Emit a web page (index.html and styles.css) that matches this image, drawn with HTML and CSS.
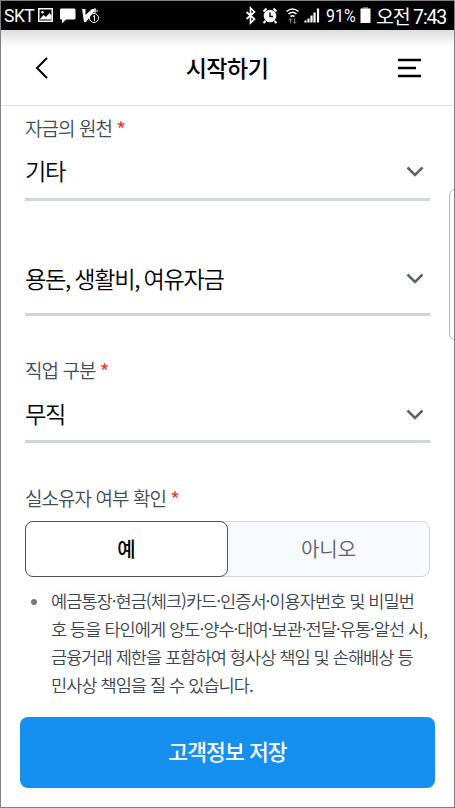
FILE: index.html
```html
<!DOCTYPE html>
<html lang="ko">
<head>
<meta charset="utf-8">
<title>시작하기</title>
<link rel="stylesheet" href="styles.css">
</head>
<body>
<div class="phone">
  <div class="status">
    <span class="carrier">SKT</span>
    <svg class="left-icons" width="64" height="20" viewBox="0 0 64 20">
      <path fill="#fff" fill-rule="evenodd" d="M1 2h15v14H1zM2.500 3.500v11h12v-11z"/>
      <path fill="#fff" d="M3 13l3.500-4 2.500 2 3.500-4 2 2.500v4H3z"/><circle cx="5.500" cy="6.200" r="1.200" fill="#fff"/>
      <path fill="#fff" d="M24 2.500h13q1.500 0 1.500 1.500v8q0 1.500-1.500 1.500h-8l-4 4v-4h-1q-1 0-1-1.500v-8q0-1.500 1-1.500z"/>
      <path fill="#fff" d="M45 3h3.500v6l6.500-6h4L49 16h-2z"/>
      <circle cx="57" cy="12" r="4.500" fill="#000" stroke="#fff"/><path d="M56 10.500l1.500-1V15M58 2v5M55.500 5H61" fill="none" stroke="#fff"/>
    </svg>
    <svg class="right-icons" width="76" height="20" viewBox="0 0 76 20">
      <path d="M1.500 6l8 7-4 4V2l4 4-8 7" fill="none" stroke="#fff" stroke-width="1.700"/>
      <circle cx="25" cy="10" r="6.300" fill="#fff"/><path d="M18.500 5.500l3-3M31.500 5.500l-3-3M20.500 15l-2 2M29.500 15l2 2" stroke="#fff" stroke-width="2"/><path d="M25 6.500V10.500h3" fill="none" stroke="#000" stroke-width="1.400"/>
      <path d="M41.500 5.500q6-5 12 0M43.500 8q4-3.500 8 0M45.500 10.500q2-1.500 4 0" fill="none" stroke="#fff" stroke-width="1.600"/><path d="M45.500 12.500v5M43.800 14.500l1.700-2 1.500 2M49.500 12.500v5M48 15.500l1.500 2 1.700-2" fill="none" stroke="#777"/>
      <path d="M60.500 16.500v-2M63.500 16.500v-4M66.500 16.500v-7M69.500 16.500v-10M73 16.500v-14" stroke="#fff" stroke-width="2.200"/>
    </svg>
    <span class="percent">91%</span>
    <svg class="battery" width="11" height="17" viewBox="0 0 11 17"><path d="M3 0h5v2H3z" fill="#666"/><path d="M.5 1.500h10V16H.5z" fill="#fff"/></svg>
    <span class="clock">오전 7:43</span>
  </div>
  <header class="header">
    <svg width="14" height="24" viewBox="0 0 14 24"><path d="M12 2L2 12l10 10" fill="none" stroke="#000" stroke-width="2"/></svg>
    <h1>시작하기</h1>
    <svg width="24" height="20" viewBox="0 0 24 20"><path d="M0 2h23M0 10h18M0 18h23" stroke="#000" stroke-width="2.300"/></svg>
  </header>
  <main class="form">
    <label class="label">자금의 원천<i>*</i></label>
    <div class="select first"><span>기타</span><svg class="chev" width="18" height="12" viewBox="0 0 18 12"><path d="M1.500 1.500L9 9l7.500-7.500" /></svg></div>
    <div class="select second"><span>용돈, 생활비, 여유자금</span><svg class="chev" width="18" height="12" viewBox="0 0 18 12"><path d="M1.500 1.500L9 9l7.500-7.500" /></svg></div>
    <label class="label job">직업 구분<i>*</i></label>
    <div class="select third"><span>무직</span><svg class="chev" width="18" height="12" viewBox="0 0 18 12"><path d="M1.500 1.500L9 9l7.500-7.500" /></svg></div>
    <label class="label owner">실소유자 여부 확인<i>*</i></label>
    <div class="toggle"><div class="yes">예</div><div class="no">아니오</div></div>
    <ul class="note"><li>예금통장·현금(체크)카드·인증서·이용자번호 및 비밀번<br>호 등을 타인에게 양도·양수·대여·보관·전달·유통·알선 시,<br>금융거래 제한을 포함하여 형사상 책임 및 손해배상 등<br>민사상 책임을 질 수 있습니다.</li></ul>
  </main>
  <button class="save">고객정보 저장</button>
  <div class="edge"></div>
</div>
</body>
</html>
```
FILE: styles.css
```css
* { box-sizing: border-box; }
body { margin: 0; font-family: "Noto Sans CJK KR", sans-serif; color: #000; }
.phone { position: relative; width: 455px; height: 808px; border: 1px solid #808080; background: #fff; overflow: hidden; display: flex; flex-direction: column; }
.status { flex: none; height: 29px; background: #000; color: #fff; display: flex; align-items: center; padding-left: 3px; font-family: Roboto, "Noto Sans CJK KR", sans-serif; font-size: 18px; white-space: nowrap; }
.carrier { width: 33px; font-size: 17.500px; letter-spacing: -.5px; }
.right-icons { margin-left: 144px; }
.percent { margin-left: 5px; width: 34px; font-size: 19px; transform: scaleX(.84); transform-origin: left; }
.battery { flex: none; }
.clock { margin-left: 5px; font-size: 19.500px; letter-spacing: -1.200px; }
.header { flex: none; height: 76px; display: flex; align-items: center; justify-content: space-between; padding: 0 32px 0 34px; border-bottom: 1px solid #dfe0e2; background: linear-gradient(#ddd, #fff 17px); }
.header h1 { margin: 0 0 2px 7px; font-size: 23px; line-height: 34px; font-weight: 500; letter-spacing: -.5px; }
.form { flex: none; height: 611px; padding: 8px 24px 0; }
.label { display: block; height: 28px; line-height: 28px; font-size: 19px; font-weight: 350; letter-spacing: -.95px; color: #434b54; }
.label i { font-style: normal; font-size: 22px; line-height: 20px; font-weight: 350; color: #e8382d; margin-left: 4px; vertical-align: -3px; }
.select { display: flex; justify-content: space-between; align-items: center; border-bottom: 3px solid #d0d6e0; padding: 0 6px 0 0; font-size: 23.200px; font-weight: 350; letter-spacing: -1.300px; word-spacing: -1px; }
.first { height: 59px; }
.second { height: 74px; margin-top: 41px; }
.third { height: 58px; }
.job { margin-top: 40px; margin-bottom: 1px; }
.owner { margin-top: 41px; }
.chev { fill: none; stroke: #5b636d; stroke-width: 2.500; position: relative; top: 2px; }
.second .chev { top: 1px; }
.toggle { height: 56px; margin-top: 9px; display: flex; border: 1px solid #d0d6e0; border-radius: 8px; background: #f7f9fd; font-size: 20px; line-height: 53px; text-align: center; }
.yes { width: 203px; margin: -1px 0 -1px -1px; border: 1px solid #4d545e; border-radius: 8px; background: #fff; font-weight: 500; }
.no { flex: 1; font-weight: 350; color: #5b626b; }
.note { list-style: none; margin: 10px 0 0; padding: 0 0 0 26px; font-size: 17.600px; line-height: 28px; font-weight: 350; letter-spacing: -1px; color: #3c444d; white-space: nowrap; }
.note li { position: relative; }
.note li::before { content: ""; position: absolute; left: -20px; top: 12px; width: 6px; height: 6px; border-radius: 50%; background: #737980; }
.save { flex: none; width: 415px; height: 71px; margin: 0 0 0 19px; padding: 0 0 4px; border: 0; border-radius: 8px; background: #1590f0; color: #fff; font: 500 21.500px "Noto Sans CJK KR", sans-serif; letter-spacing: -.9px; }
.edge { position: absolute; left: 448px; top: 188px; width: 12px; height: 151px; border: 1px solid #bbb; border-radius: 6px; background: #fff; }
```
